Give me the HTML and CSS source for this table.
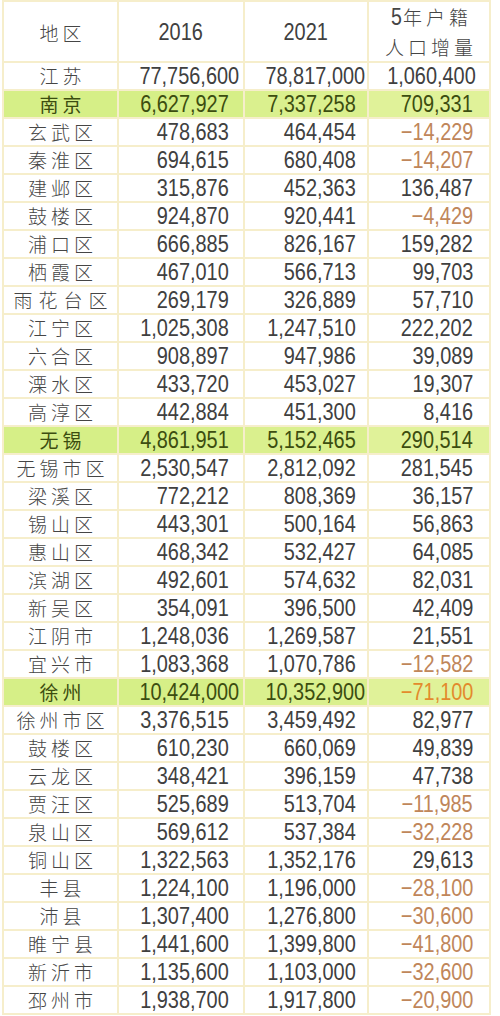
FILE: index.html
```html
<!DOCTYPE html>
<html lang="zh">
<head>
<meta charset="utf-8">
<link rel="stylesheet" href="styles.css">
</head>
<body>
<table class="tbl">
<colgroup><col class="c1"><col class="c2"><col class="c3"><col class="c4"></colgroup>
<thead>
<tr class="head">
<th class="name"><span class="zh">地区</span></th>
<th><span class="n">2016</span></th>
<th><span class="n">2021</span></th>
<th class="inc"><span class="l1"><span class="n5">5</span>年户籍</span><span class="l2">人口增量</span></th>
</tr>
</thead>
<tbody>
<tr><td class="name">江苏</td><td><span class="n">77,756,600</span></td><td><span class="n">78,817,000</span></td><td><span class="n">1,060,400</span></td></tr>
<tr class="hl"><td class="name">南京</td><td><span class="n">6,627,927</span></td><td><span class="n">7,337,258</span></td><td><span class="n">709,331</span></td></tr>
<tr><td class="name">玄武区</td><td><span class="n">478,683</span></td><td><span class="n">464,454</span></td><td class="neg"><span class="n">−14,229</span></td></tr>
<tr><td class="name">秦淮区</td><td><span class="n">694,615</span></td><td><span class="n">680,408</span></td><td class="neg"><span class="n">−14,207</span></td></tr>
<tr><td class="name">建邺区</td><td><span class="n">315,876</span></td><td><span class="n">452,363</span></td><td><span class="n">136,487</span></td></tr>
<tr><td class="name">鼓楼区</td><td><span class="n">924,870</span></td><td><span class="n">920,441</span></td><td class="neg"><span class="n">−4,429</span></td></tr>
<tr><td class="name">浦口区</td><td><span class="n">666,885</span></td><td><span class="n">826,167</span></td><td><span class="n">159,282</span></td></tr>
<tr><td class="name">栖霞区</td><td><span class="n">467,010</span></td><td><span class="n">566,713</span></td><td><span class="n">99,703</span></td></tr>
<tr><td class="name wide">雨花台区</td><td><span class="n">269,179</span></td><td><span class="n">326,889</span></td><td><span class="n">57,710</span></td></tr>
<tr><td class="name">江宁区</td><td><span class="n">1,025,308</span></td><td><span class="n">1,247,510</span></td><td><span class="n">222,202</span></td></tr>
<tr><td class="name">六合区</td><td><span class="n">908,897</span></td><td><span class="n">947,986</span></td><td><span class="n">39,089</span></td></tr>
<tr><td class="name">溧水区</td><td><span class="n">433,720</span></td><td><span class="n">453,027</span></td><td><span class="n">19,307</span></td></tr>
<tr><td class="name">高淳区</td><td><span class="n">442,884</span></td><td><span class="n">451,300</span></td><td><span class="n">8,416</span></td></tr>
<tr class="hl"><td class="name">无锡</td><td><span class="n">4,861,951</span></td><td><span class="n">5,152,465</span></td><td><span class="n">290,514</span></td></tr>
<tr><td class="name">无锡市区</td><td><span class="n">2,530,547</span></td><td><span class="n">2,812,092</span></td><td><span class="n">281,545</span></td></tr>
<tr><td class="name">梁溪区</td><td><span class="n">772,212</span></td><td><span class="n">808,369</span></td><td><span class="n">36,157</span></td></tr>
<tr><td class="name">锡山区</td><td><span class="n">443,301</span></td><td><span class="n">500,164</span></td><td><span class="n">56,863</span></td></tr>
<tr><td class="name">惠山区</td><td><span class="n">468,342</span></td><td><span class="n">532,427</span></td><td><span class="n">64,085</span></td></tr>
<tr><td class="name">滨湖区</td><td><span class="n">492,601</span></td><td><span class="n">574,632</span></td><td><span class="n">82,031</span></td></tr>
<tr><td class="name">新吴区</td><td><span class="n">354,091</span></td><td><span class="n">396,500</span></td><td><span class="n">42,409</span></td></tr>
<tr><td class="name">江阴市</td><td><span class="n">1,248,036</span></td><td><span class="n">1,269,587</span></td><td><span class="n">21,551</span></td></tr>
<tr><td class="name">宜兴市</td><td><span class="n">1,083,368</span></td><td><span class="n">1,070,786</span></td><td class="neg"><span class="n">−12,582</span></td></tr>
<tr class="hl"><td class="name">徐州</td><td><span class="n">10,424,000</span></td><td><span class="n">10,352,900</span></td><td class="neg strong"><span class="n">−71,100</span></td></tr>
<tr><td class="name">徐州市区</td><td><span class="n">3,376,515</span></td><td><span class="n">3,459,492</span></td><td><span class="n">82,977</span></td></tr>
<tr><td class="name">鼓楼区</td><td><span class="n">610,230</span></td><td><span class="n">660,069</span></td><td><span class="n">49,839</span></td></tr>
<tr><td class="name">云龙区</td><td><span class="n">348,421</span></td><td><span class="n">396,159</span></td><td><span class="n">47,738</span></td></tr>
<tr><td class="name">贾汪区</td><td><span class="n">525,689</span></td><td><span class="n">513,704</span></td><td class="neg"><span class="n">−11,985</span></td></tr>
<tr><td class="name">泉山区</td><td><span class="n">569,612</span></td><td><span class="n">537,384</span></td><td class="neg"><span class="n">−32,228</span></td></tr>
<tr><td class="name">铜山区</td><td><span class="n">1,322,563</span></td><td><span class="n">1,352,176</span></td><td><span class="n">29,613</span></td></tr>
<tr><td class="name">丰县</td><td><span class="n">1,224,100</span></td><td><span class="n">1,196,000</span></td><td class="neg"><span class="n">−28,100</span></td></tr>
<tr><td class="name">沛县</td><td><span class="n">1,307,400</span></td><td><span class="n">1,276,800</span></td><td class="neg"><span class="n">−30,600</span></td></tr>
<tr><td class="name">睢宁县</td><td><span class="n">1,441,600</span></td><td><span class="n">1,399,800</span></td><td class="neg"><span class="n">−41,800</span></td></tr>
<tr><td class="name">新沂市</td><td><span class="n">1,135,600</span></td><td><span class="n">1,103,000</span></td><td class="neg"><span class="n">−32,600</span></td></tr>
<tr><td class="name">邳州市</td><td><span class="n">1,938,700</span></td><td><span class="n">1,917,800</span></td><td class="neg"><span class="n">−20,900</span></td></tr>
</tbody>
</table>
</body>
</html>
```
FILE: styles.css
```css
html, body {
  margin: 0;
  padding: 0;
  background: #ffffff;
}
body {
  padding-left: 2px;
  font-family: "Liberation Sans", "Noto Sans CJK SC", sans-serif;
  color: #404040;
}
.tbl {
  border-collapse: collapse;
  table-layout: fixed;
  width: 487px;
}
.c1 { width: 115px; }
.c2 { width: 126px; }
.c3 { width: 124px; }
.c4 { width: 122px; }
.tbl th, .tbl td {
  border: 2px solid #f6eecb;
  padding: 0;
  font-weight: normal;
  white-space: nowrap;
  overflow: hidden;
}
.tbl td {
  height: 26px;
  text-align: right;
  font-size: 24px;
  line-height: 26px;
}
.tbl td:nth-child(2) { padding-right: 14px; }
.tbl td:nth-child(3) { padding-right: 11px; }
.tbl td:nth-child(4) { padding-right: 16px; }
.tbl td.name, .tbl th.name {
  text-align: center;
  padding: 0 0 0 4px;
  font-family: "Noto Sans CJK SC", sans-serif;
  font-size: 19px;
  font-weight: 300;
  letter-spacing: 4px;
  color: #454545;
}
.tbl td.name.wide {
  letter-spacing: 6px;
  padding-left: 6px;
}
.n {
  display: inline-block;
  transform: scaleX(0.83);
  transform-origin: right center;
}
.head th {
  height: 59px;
  text-align: center;
  font-size: 24px;
  color: #404040;
}
.head th .n {
  transform-origin: center center;
}
.head th.name .zh {
  display: inline-block;
  padding-top: 2px;
}
.head th.inc {
  font-family: "Noto Sans CJK SC", sans-serif;
  font-size: 19px;
  font-weight: 300;
  line-height: 29px;
  letter-spacing: 4px;
  padding-left: 4px;
  color: #454545;
}
.head th.inc .l1, .head th.inc .l2 {
  display: block;
}
.head th.inc .n5 {
  font-family: "Liberation Sans", sans-serif;
  font-size: 23px;
  letter-spacing: 0;
  display: inline-block;
  transform: scaleX(0.85);
}
.hl td {
  background: #d6ef87;
  color: #3c4d10;
}
.hl td:nth-child(3) { background: #daf08e; }
.hl td:nth-child(4) { background: #e0f299; }
.hl td.name { color: #3c4d10; font-weight: normal; }
.neg { color: #c0865a; }
.neg.strong { color: #e38a2c; }
```
